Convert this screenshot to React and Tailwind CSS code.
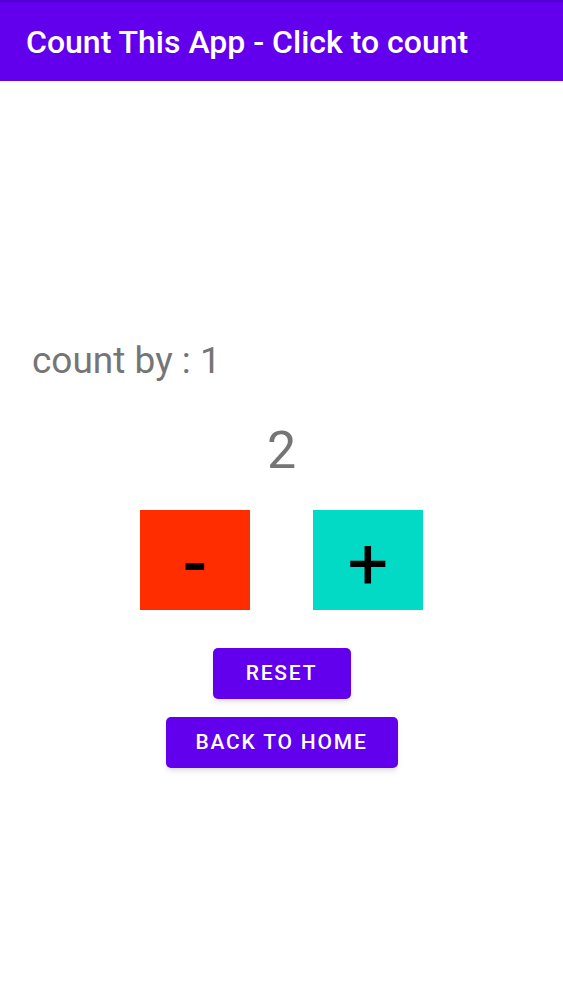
import { useState } from "react";

const App = () => {
  const [count, setCount] = useState(2);
  const step = 1;

  return (
    <div className="min-h-screen bg-white" style={{ fontFamily: "Roboto, 'Liberation Sans', sans-serif" }}>
      {/* App bar */}
      <header className="h-[81px] bg-[#6200ee] flex items-center px-[26px] border-t-2 border-[#5000d0]">
        <h1 className="text-white text-[32px] font-medium">Count This App - Click to count</h1>
      </header>

      <main className="flex flex-col">
        <p className="mt-[258px] ml-[32px] text-[37px] leading-[44px] text-[#757575]">count by : {step}</p>

        <div className="mt-[38px] text-center text-[52px] leading-[60px] text-[#757575]">{count}</div>

        {/* counter buttons */}
        <div className="mt-[29px] flex justify-center gap-[63px]">
          <button
            onClick={() => setCount(count - step)}
            className="w-[110px] h-[100px] pt-[9px] bg-[#ff2d00] text-black text-[72px] leading-none font-medium flex items-center justify-center"
          >
            -
          </button>
          <button
            onClick={() => setCount(count + step)}
            className="w-[110px] h-[100px] pt-[7px] bg-[#03dac5] text-black text-[72px] leading-none font-normal flex items-center justify-center"
          >
            +
          </button>
        </div>

        <div className="mt-[38px] flex flex-col items-center gap-[18px]">
          <button
            onClick={() => setCount(0)}
            className="w-[138px] h-[51px] rounded-[5px] bg-[#6200ee] text-white text-[21px] font-medium tracking-[1.8px] shadow-md"
          >
            RESET
          </button>
          <button className="w-[232px] h-[51px] rounded-[5px] bg-[#6200ee] text-white text-[21px] font-medium tracking-[1.8px] shadow-md">
            BACK TO HOME
          </button>
        </div>
      </main>
    </div>
  );
};

export default App;
